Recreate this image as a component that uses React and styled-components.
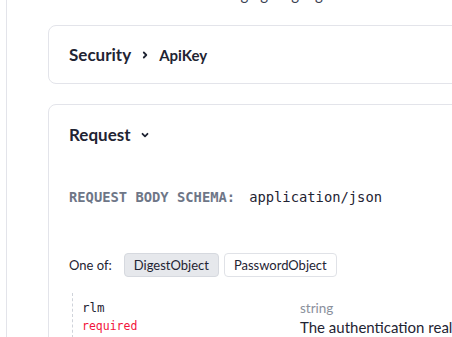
import React from 'react'
import styled, { createGlobalStyle } from 'styled-components'

const GlobalStyle = createGlobalStyle`
  html, body {
    margin: 0;
    padding: 0;
    background: #ffffff;
    overflow: hidden;
  }
  body {
    font-family: Lato, "Open Sans", sans-serif;
    color: #1f2433;
  }
`

const Page = styled.div`
  margin-left: 6px;
  border-left: 1px solid #e3e4ea;
  min-height: 337px;
  padding-left: 41px;
  overflow: hidden;
`

const Intro = styled.p`
  margin: -15px 0 0 0;
  padding-left: 20px;
  font-size: 15px;
  line-height: 18px;
  color: #3b4151;
  white-space: nowrap;
`

const Card = styled.section`
  margin-top: ${p => p.$top}px;
  margin-right: -20px;
  border: 1px solid #e3e4ea;
  border-radius: 8px;
  padding: ${p => p.$pad};
  background: #fff;
`

const Title = styled.h2`
  margin: 0;
  display: flex;
  align-items: center;
  gap: 9px;
  font-size: 17px;
  font-weight: 700;
  line-height: 22px;
  color: #1f2433;
`

const Sub = styled.span`
  font-size: 15px;
  font-weight: 700;
`

const Schema = styled.div`
  margin-top: 42px;
  font-family: "DejaVu Sans Mono", "Liberation Mono", monospace;
  font-size: 13.8px;
  line-height: 18px;
  display: flex;
  gap: 14px;
`

const SchemaLabel = styled.span`
  font-weight: 700;
  color: #6e7687;
`

const SchemaType = styled.span`
  color: #1f2433;
`

const OneOf = styled.div`
  margin-top: 47px;
  display: flex;
  align-items: center;
  font-size: 13px;
`

const OneOfLabel = styled.span`
  margin-right: 12px;
  color: #1f2433;
`

const Choice = styled.button`
  font-family: inherit;
  font-size: 13px;
  height: 24px;
  padding: 0 9px;
  margin-right: 5px;
  border-radius: 4px;
  border: 1px solid ${p => (p.$active ? '#d6d9df' : '#e0e2e7')};
  background: ${p => (p.$active ? '#e6e8ec' : '#ffffff')};
  color: #1f2433;
`

const Props = styled.div`
  margin-top: 16px;
  margin-left: 3px;
  border-left: 1px dashed #cfd3da;
  display: grid;
  grid-template-columns: 227px 1fr;
  padding-top: 6px;
`

const PropName = styled.div`
  padding-left: 9px;
  display: flex;
  flex-direction: column;
`

const Name = styled.span`
  font-family: "DejaVu Sans Mono", "Liberation Mono", monospace;
  font-size: 12.5px;
  line-height: 18px;
  color: #1f2433;
`

const Required = styled.span`
  font-family: "DejaVu Sans Mono", "Liberation Mono", monospace;
  font-size: 11.5px;
  line-height: 18px;
  color: #f2143c;
`

const PropInfo = styled.div`
  display: flex;
  flex-direction: column;
  white-space: nowrap;
`

const Type = styled.span`
  font-size: 13.5px;
  line-height: 18px;
  color: #8a909c;
`

const Desc = styled.span`
  font-size: 15px;
  line-height: 21px;
  color: #1f2433;
`

const Chevron = ({ dir }) => (
  <svg width="10" height="10" viewBox="0 0 10 10" fill="none" stroke="#1f2433" strokeWidth="1.8" strokeLinecap="round" strokeLinejoin="round">
    {dir === 'down'
      ? <path d="M2.5 3.8 L5 6.3 L7.5 3.8" />
      : <path d="M3.8 2.5 L6.3 5 L3.8 7.5" />}
  </svg>
)

export default function App() {
  return (
    <>
      <GlobalStyle />
      <Page>
        <Intro>The server uses the messaging language that is set in the account for each response</Intro>
        <Card $top={22} $pad="18px 20px 17px">
          <Title>
            Security <Chevron dir="right" /> <Sub>ApiKey</Sub>
          </Title>
        </Card>
        <Card $top={20} $pad="19px 20px 30px">
          <Title>
            Request <Chevron dir="down" />
          </Title>
          <Schema>
            <SchemaLabel>REQUEST BODY SCHEMA:</SchemaLabel>
            <SchemaType>application/json</SchemaType>
          </Schema>
          <OneOf>
            <OneOfLabel>One of:</OneOfLabel>
            <Choice $active>DigestObject</Choice>
            <Choice>PasswordObject</Choice>
          </OneOf>
          <Props>
            <PropName>
              <Name>rlm</Name>
              <Required>required</Required>
            </PropName>
            <PropInfo>
              <Type>string</Type>
              <Desc>The authentication realm as provided by the server</Desc>
            </PropInfo>
          </Props>
        </Card>
      </Page>
    </>
  )
}
